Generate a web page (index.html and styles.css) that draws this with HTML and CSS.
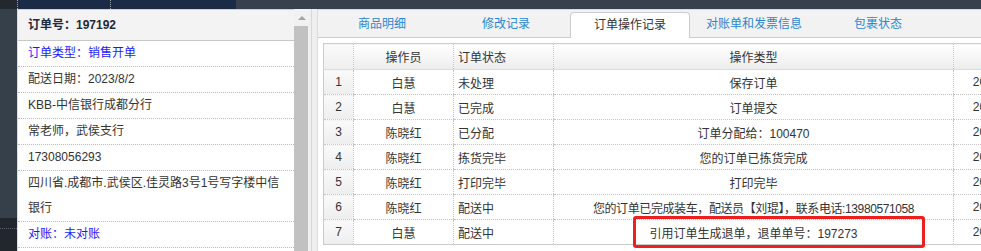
FILE: index.html
```html
<!DOCTYPE html>
<html lang="zh-CN">
<head>
  <meta charset="UTF-8" />
  <title>订单详情</title>
  <link rel="stylesheet" href="styles.css">
</head>
<body>

  <div class="topbar">
    <div class="tb-a"></div>
    <div class="tb-b"></div>
    <div class="tb-b tb-b2"></div>
    <div class="tb-c"></div>
  </div>

  <div class="main">
    <div class="rail">
      <div class="rail-top"></div>
      <div class="rail-bottom"></div>
    </div>

    <div class="info">
      <div class="info-list">
        <div class="info-head">订单号：197192</div>
        <div class="info-row blue">订单类型：销售开单</div>
        <div class="info-row">配送日期：2023/8/2</div>
        <div class="info-row">KBB-中信银行成都分行</div>
        <div class="info-row">常老师，武侯支行</div>
        <div class="info-row">17308056293</div>
        <div class="info-row">四川省.成都市.武侯区.佳灵路3号1号写字楼中信银行</div>
        <div class="info-row blue">对账：未对账</div>
        <div class="info-row">&nbsp;</div>
      </div>
      <div class="scrollbar">
        <div class="sb-up"></div>
        <div class="sb-thumb"></div>
      </div>
    </div>

    <div class="splitter"></div>

    <div class="detail">
      <div class="tabs">
        <div class="tab">商品明细</div>
        <div class="tab">修改记录</div>
        <div class="tab active">订单操作记录</div>
        <div class="tab">对账单和发票信息</div>
        <div class="tab">包裹状态</div>
      </div>

      <div class="table-wrap">
        <table class="log">
          <colgroup>
            <col style="width:30px">
            <col style="width:100px">
            <col style="width:100px">
            <col style="width:400px">
            <col style="width:150px">
          </colgroup>
          <thead>
            <tr>
              <th class="num"></th>
              <th>操作员</th>
              <th class="left">订单状态</th>
              <th>操作类型</th>
              <th>操作时间</th>
            </tr>
          </thead>
          <tbody>
            <tr><td class="num">1</td><td>白慧</td><td class="left">未处理</td><td>保存订单</td><td>2023-08-01 16:42:18</td></tr>
            <tr><td class="num">2</td><td>白慧</td><td class="left">已完成</td><td>订单提交</td><td>2023-08-01 16:42:25</td></tr>
            <tr><td class="num">3</td><td>陈晓红</td><td class="left">已分配</td><td>订单分配给：100470</td><td>2023-08-01 17:05:10</td></tr>
            <tr><td class="num">4</td><td>陈晓红</td><td class="left">拣货完毕</td><td>您的订单已拣货完成</td><td>2023-08-02 08:31:46</td></tr>
            <tr><td class="num">5</td><td>陈晓红</td><td class="left">打印完毕</td><td>打印完毕</td><td>2023-08-02 08:35:02</td></tr>
            <tr><td class="num">6</td><td>陈晓红</td><td class="left">配送中</td><td class="tight">您的订单已完成装车，配送员【刘琨】，联系电话:13980571058</td><td>2023-08-02 09:12:37</td></tr>
            <tr><td class="num">7</td><td>白慧</td><td class="left">配送中</td><td>引用订单生成退单，退单单号：197273</td><td>2023-08-03 10:20:51</td></tr>
          </tbody>
        </table>
        <div class="mark"></div>
      </div>
    </div>
  </div>

</body>
</html>
```

FILE: styles.css
```css
body {
  margin: 0;
  width: 981px;
  height: 251px;
  overflow: hidden;
  font-family: "Liberation Sans", "Noto Sans CJK SC", sans-serif;
  font-size: 12px;
  color: #333;
  background: #f0f0f0;
}

/* strip of the page header above */
.topbar {
  display: flex;
  height: 9px;
}

.tb-a {
  width: 17px;
  background: #23272e;
}

.tb-b {
  width: 92px;
  background: #1b2a47;
  border-left: 1px dotted #9aa3b0;
}

.tb-b2 {
  width: 125px;
}

.tb-c {
  flex: 1;
  background: #37414d;
}

.main {
  display: flex;
  height: 242px;
}

.rail {
  width: 17px;
  display: flex;
  flex-direction: column;
}

.rail-top {
  height: 209px;
  background: #36404a;
}

.rail-bottom {
  flex: 1;
  background: #22272e;
}

.rail-bottom::after {
  content: "";
  display: block;
  margin-top: 10px;
  border-top: 1px dotted #5a626c;
}

/* left order info */
.info {
  display: flex;
  width: 292px;
}

.info-list {
  width: 276px;
  background: #fff;
  border-left: 1px solid #dcdcdc;
  border-top: 1px solid #d0d0d0;
  overflow: hidden;
}

.info-head {
  height: 30px;
  line-height: 30px;
  padding-left: 10px;
  background: #f3f3f3;
  border-bottom: 1px solid #c8c8c8;
  font-weight: bold;
  color: #1f2a3c;
}

.info-row {
  line-height: 25px;
  padding: 0 8px 0 10px;
  border-bottom: 1px dotted #bbb;
}

.info-row.blue {
  color: #1a1aff;
}

.scrollbar {
  width: 15px;
  background: #f1f1f1;
  display: flex;
  flex-direction: column;
}

.sb-up {
  height: 17px;
  display: flex;
  align-items: center;
  justify-content: center;
}

.sb-up::before {
  content: "";
  border-left: 4px solid transparent;
  border-right: 4px solid transparent;
  border-bottom: 4px solid #a3a3a3;
}

.sb-thumb {
  flex: 1;
  margin-right: 1px;
  background: #c1c1c1;
}

.splitter {
  width: 8px;
  background: #efefef;
}

.splitter::before {
  content: "";
  display: block;
  margin-left: 2px;
  width: 1px;
  height: 100%;
  background: #d8d8d8;
}

/* right tab panel */
.detail {
  flex: 1;
  background: #fff;
  border-left: 1px solid #dcdcdc;
  border-top: 1px solid #dcdcdc;
  overflow: hidden;
}

.tabs {
  display: flex;
  gap: 4px;
  height: 25px;
  padding: 2px 0 0 4px;
  background: #f2f2f2;
  border-bottom: 1px solid #ccc;
}

.tab {
  width: 120px;
  flex: none;
  line-height: 25px;
  text-align: center;
  color: #2a86d0;
}

.tab.active {
  height: 26px;
  line-height: 24px;
  color: #333;
  background: #fff;
  border: 1px solid #ccc;
  border-bottom: none;
  border-radius: 4px 4px 0 0;
  box-sizing: border-box;
  margin-bottom: -1px;
}

.table-wrap {
  position: relative;
  padding: 5px 0 0 5px;
}

.log {
  table-layout: fixed;
  width: 780px;
  border-collapse: collapse;
  border: 1px solid #ccc;
}

.log th,
.log td {
  padding: 0 4px;
  text-align: center;
  white-space: nowrap;
  overflow: hidden;
  border-left: 1px dotted #c4c4c4;
  border-bottom: 1px dotted #c4c4c4;
  font-weight: normal;
}

.log th {
  height: 25px;
  color: #333;
  background: linear-gradient(#ffffff, #ededed);
  border-bottom: 1px solid #dcdcdc;
}

.log td {
  height: 24px;
}

.log .left {
  text-align: left;
}

.log .tight {
  letter-spacing: -0.4px;
}

.log .num {
  padding: 0;
  background: linear-gradient(#fafafa, #eeeeee);
}

/* highlight drawn over the last row */
.mark {
  position: absolute;
  left: 315px;
  top: 178px;
  width: 292px;
  height: 32px;
  box-sizing: border-box;
  border: 3px solid #ee1f1f;
  border-radius: 3px;
}
```
